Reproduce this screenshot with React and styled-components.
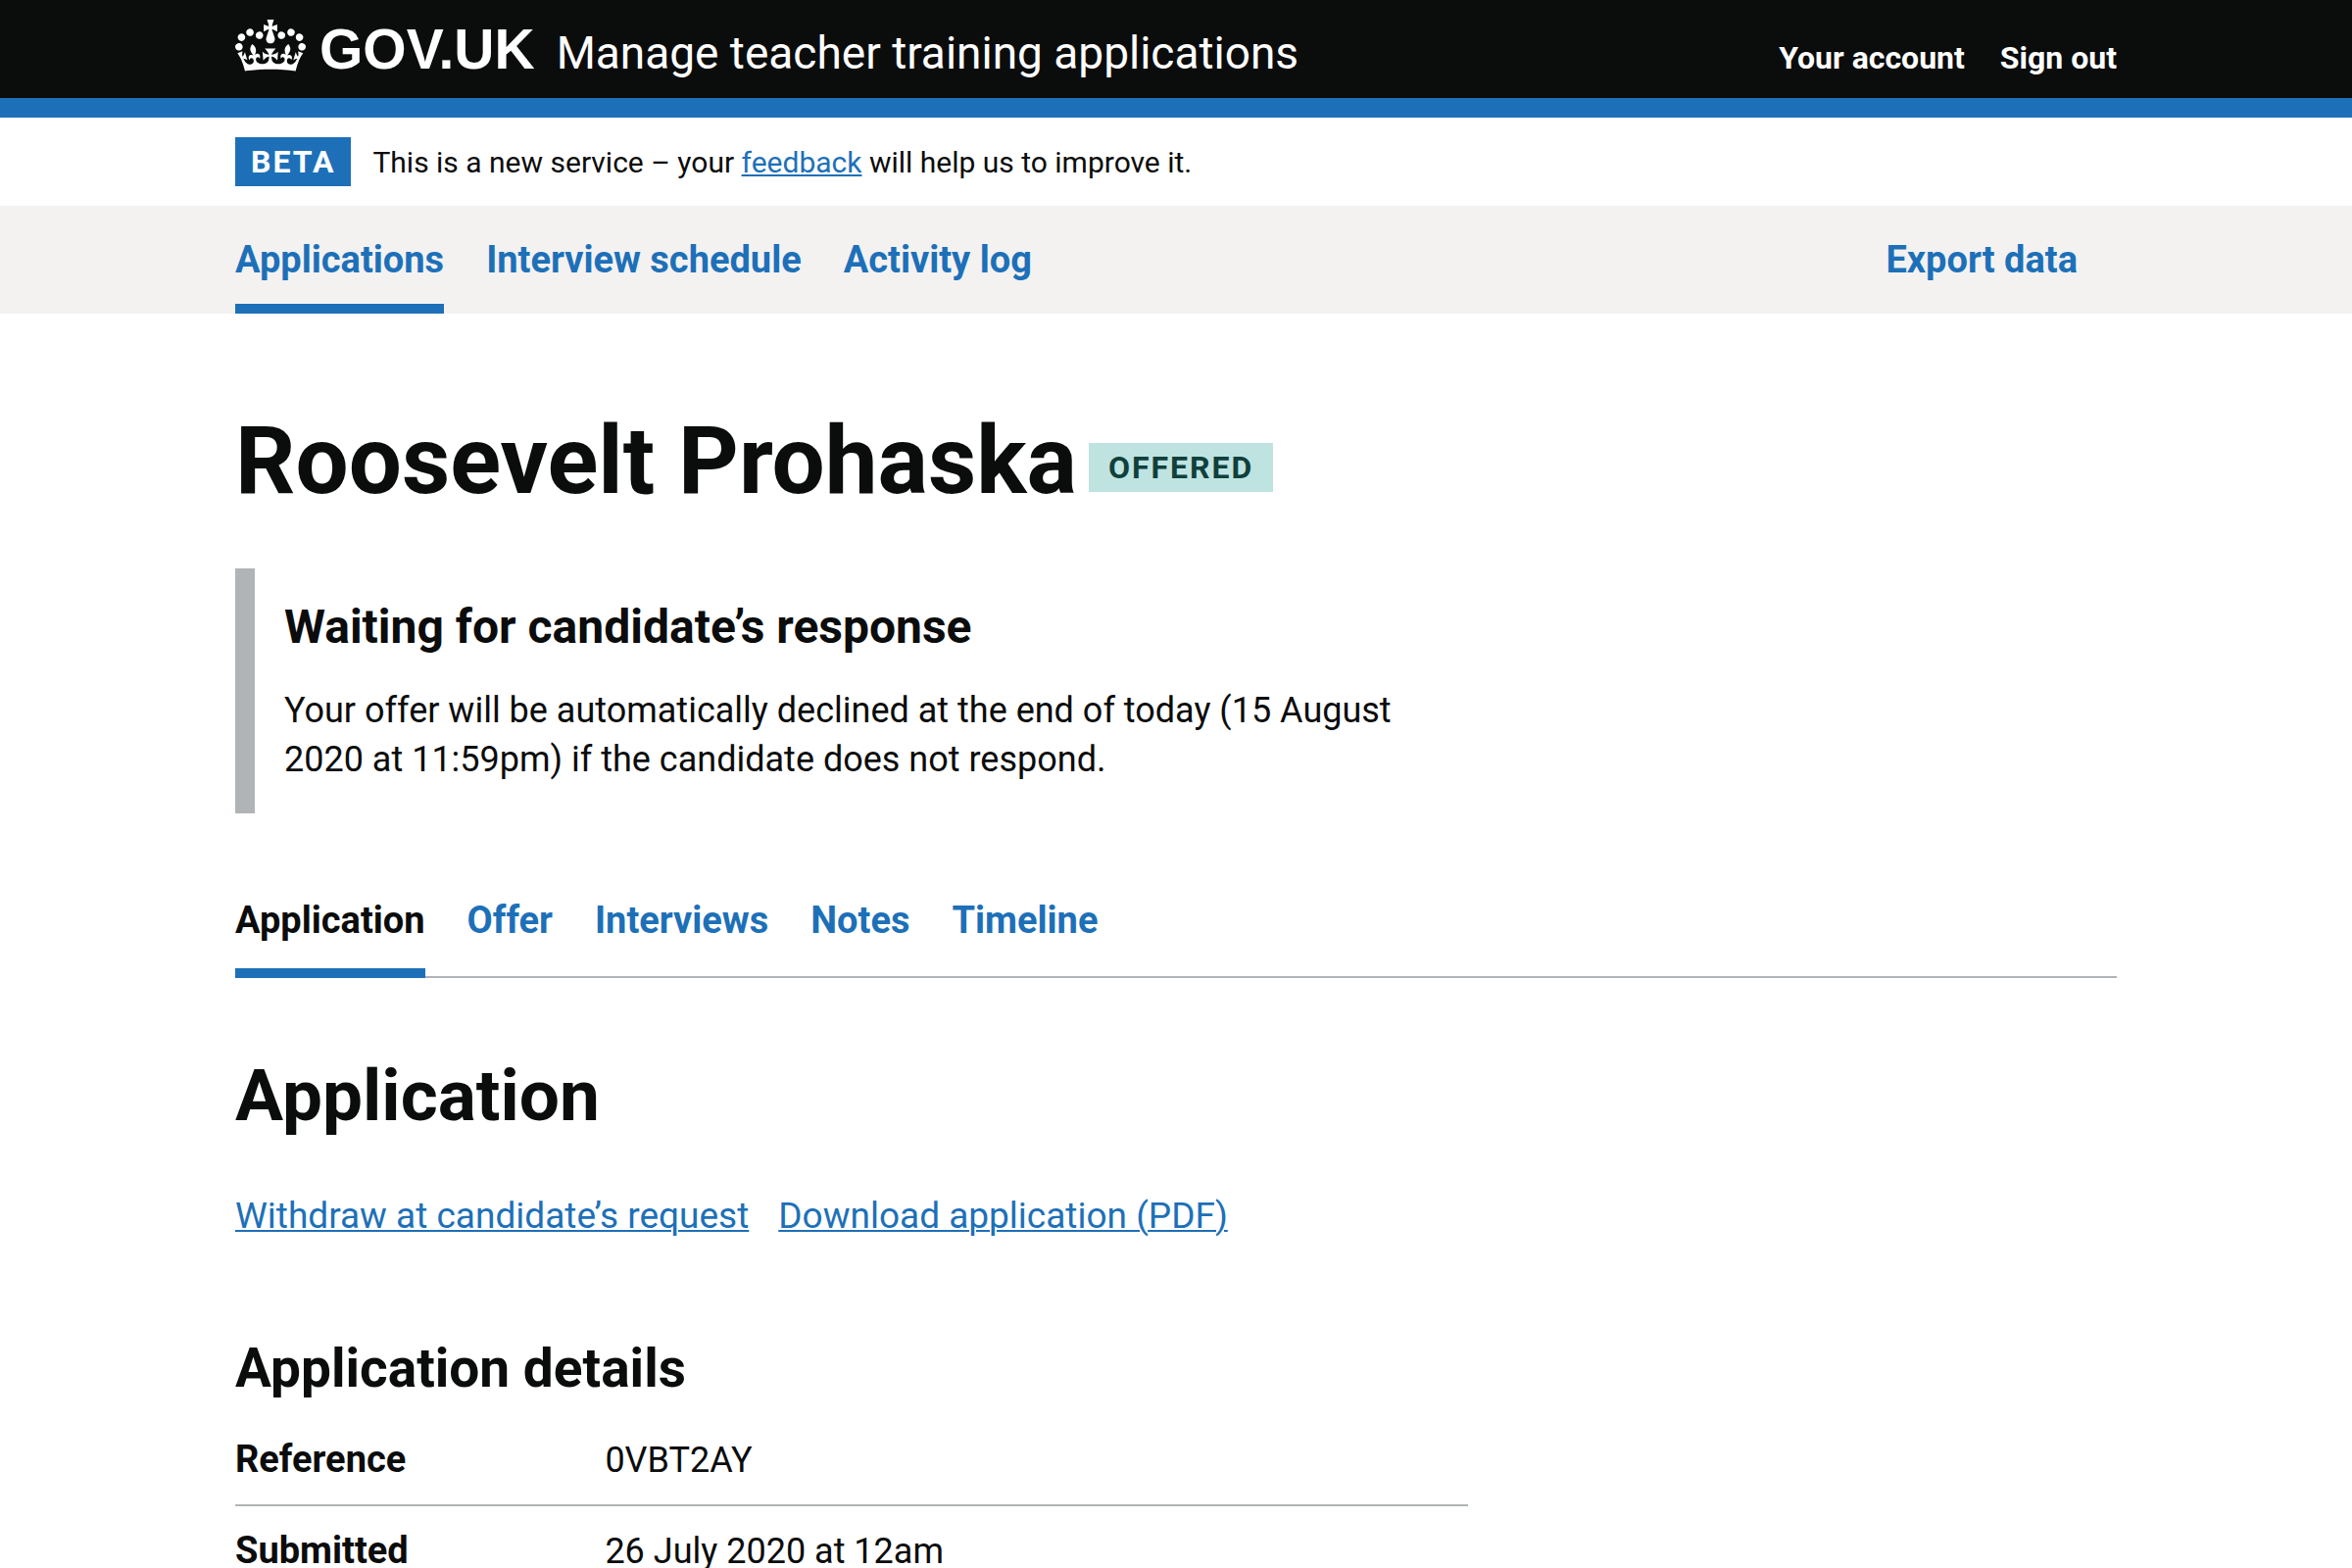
import React from "react";
import styled, { createGlobalStyle } from "styled-components";

const color = {
  text: "#0b0c0c",
  brand: "#1d70b8",
  border: "#b1b4b6",
  panel: "#f3f2f1",
  white: "#ffffff",
};

const GlobalStyle = createGlobalStyle`
  *, *::before, *::after { box-sizing: border-box; }
  body {
    margin: 0;
    background: ${color.white};
    color: ${color.text};
    font-family: Roboto, "Liberation Sans", Arial, sans-serif;
    font-size: 36px;
    line-height: 50px;
  }
  h1, h2, h3, p, ul, dl, dd { margin: 0; padding: 0; }
  ul { list-style: none; }
`;

const Container = styled.div`
  width: 80%;
  max-width: 1920px;
  margin: 0 auto;
`;

const Header = styled.header`
  background: ${color.text};
  color: ${color.white};
  border-bottom: 20px solid ${color.brand};
`;

const HeaderBar = styled(Container)`
  display: flex;
  align-items: baseline;
  gap: 22px;
  padding: 20px 0;
`;

const LogoLink = styled.a`
  display: flex;
  align-items: baseline;
  gap: 14px;
  color: inherit;
  text-decoration: none;
  font-family: "Liberation Sans", Arial, sans-serif;
  font-size: 57px;
  font-weight: 700;
  line-height: 60px;
`;

const CrownIcon = styled.svg`
  width: 72px;
  height: 53px;
  align-self: flex-start;
  fill: currentColor;
`;

const ServiceLink = styled.a`
  color: inherit;
  text-decoration: none;
  font-size: 46px;
`;

const AccountLinks = styled.ul`
  display: flex;
  gap: 36px;
  margin-left: auto;
  font-size: 32px;
  font-weight: 700;
  line-height: 40px;
`;

const AccountLink = styled.a`
  color: inherit;
  text-decoration: none;
`;

const PhaseBanner = styled(Container)`
  display: flex;
  align-items: baseline;
  gap: 22px;
  padding: 20px 0;
`;

const Tag = styled.strong`
  padding: 5px ${(p) => (p.$status ? 20 : 16)}px;
  background: ${(p) => (p.$status ? "#bfe3e0" : color.brand)};
  color: ${(p) => (p.$status ? "#10403c" : color.white)};
  font-size: 32px;
  font-weight: 700;
  line-height: 40px;
  letter-spacing: 2px;
  text-transform: uppercase;
`;

const PhaseText = styled.p`
  font-size: 30px;
  line-height: 40px;
`;

const Link = styled.a`
  color: ${color.brand};
  text-decoration: underline;
  text-decoration-thickness: 2px;
  text-underline-offset: 2px;
`;

const PrimaryNav = styled.nav`
  background: ${color.panel};
`;

const NavList = styled.ul`
  display: flex;
  gap: 43px;
`;

const NavItem = styled.li`
  ${(p) => p.$end && "margin-left: auto; padding-right: 40px;"}
`;

const NavLink = styled.a`
  display: block;
  padding: 30px 0 20px;
  border-bottom: 10px solid ${(p) => (p.$current ? color.brand : "transparent")};
  color: ${color.brand};
  font-size: 38px;
  font-weight: 700;
  text-decoration: none;
`;

const Main = styled(Container)`
  padding: 100px 0 0;
`;

const TitleRow = styled.div`
  display: flex;
  align-items: flex-end;
  gap: 12px;

  ${Tag} { margin-bottom: 18px; }
`;

const Title = styled.h1`
  font-size: 96px;
  line-height: 100px;
`;

const TwoThirds = styled.div`
  max-width: 1258px;
`;

const Inset = styled.section`
  display: flex;
  flex-direction: column;
  gap: 30px;
  margin-top: 60px;
  padding: 30px 0 30px 30px;
  border-left: 20px solid ${color.border};
`;

const InsetTitle = styled.h2`
  font-size: 48px;
  line-height: 60px;
`;

const Tabs = styled.nav`
  margin-top: 60px;
  border-bottom: 2px solid ${color.border};
`;

const TabLink = styled.a`
  display: block;
  margin-bottom: -2px;
  padding: 24px 0;
  border-bottom: 10px solid ${(p) => (p.$current ? color.brand : "transparent")};
  color: ${(p) => (p.$current ? color.text : color.brand)};
  font-size: 38px;
  font-weight: 700;
  text-decoration: none;
`;

const SectionTitle = styled.h2`
  margin: 80px 0 58px;
  font-size: 73px;
  line-height: 80px;
`;

const Actions = styled.ul`
  display: flex;
  gap: 30px;
  font-size: 37px;
`;

const DetailsTitle = styled.h3`
  margin: 100px 0 18px;
  font-size: 55px;
  line-height: 60px;
`;

const SummaryList = styled.dl`
  display: flex;
  flex-direction: column;
`;

const SummaryRow = styled.div`
  display: grid;
  grid-template-columns: 30% 1fr;
  align-items: baseline;
  padding: 20px 0;
  border-bottom: 2px solid ${color.border};
`;

const SummaryKey = styled.dt`
  font-size: 38px;
  font-weight: 700;
`;

const Crown = () => (
  <CrownIcon viewBox="0 0 132 97" aria-hidden="true" focusable="false">
    <path
      fillRule="evenodd"
      d="M25 30.2c3.5 1.5 7.7-.2 9.1-3.7 1.5-3.6-.2-7.8-3.9-9.2-3.6-1.4-7.6.3-9.1 3.9-1.4 3.5.3 7.5 3.9 9zM9 39.5c3.6 1.5 7.8-.2 9.2-3.7 1.5-3.6-.2-7.8-3.9-9.1-3.6-1.5-7.6.2-9.1 3.8-1.4 3.5.3 7.5 3.8 9zM4.4 57.2c3.5 1.5 7.7-.2 9.1-3.8 1.5-3.6-.2-7.7-3.9-9.1-3.5-1.5-7.6.3-9.1 3.8-1.4 3.5.3 7.6 3.9 9.1zm38.3-21.4c3.5 1.5 7.7-.2 9.1-3.8 1.5-3.6-.2-7.7-3.9-9.1-3.6-1.5-7.6.3-9.1 3.8-1.3 3.6.4 7.7 3.9 9.1zm64.4-5.6c-3.6 1.5-7.8-.2-9.1-3.7-1.5-3.6.2-7.8 3.8-9.2 3.6-1.4 7.7.3 9.2 3.9 1.3 3.5-.4 7.5-3.9 9zm15.9 9.3c-3.6 1.5-7.7-.2-9.1-3.7-1.5-3.6.2-7.8 3.7-9.1 3.6-1.5 7.7.2 9.2 3.8 1.5 3.5-.3 7.5-3.8 9zm4.7 17.7c-3.6 1.5-7.8-.2-9.2-3.8-1.5-3.6.2-7.7 3.9-9.1 3.6-1.5 7.7.3 9.2 3.8 1.3 3.5-.4 7.6-3.9 9.1zM89.3 35.8c-3.6 1.5-7.8-.2-9.2-3.8-1.4-3.6.2-7.7 3.9-9.1 3.6-1.5 7.7.3 9.2 3.8 1.4 3.6-.3 7.7-3.9 9.1zM69.7 17.7l8.9 4.7V9.3l-8.9 2.8c-.2-.3-.5-.6-.9-.9L72.4 0H59.6l3.5 11.2c-.3.3-.6.5-.9.9l-8.8-2.8v13.1l8.8-4.7c.3.3.6.7.9.9l-5 15.4v.1c-.2.8-.4 1.6-.4 2.4 0 4.1 3.1 7.5 7 8.1h.2c.3 0 .7.1 1 .1.4 0 .7 0 1-.1h.2c4-.6 7.1-4.1 7.1-8.1 0-.8-.1-1.7-.4-2.4V34l-5.1-15.4c.4-.2.7-.6 1-.9zM66 92.8c16.9 0 32.8 1.1 47.1 3.2 4-16.9 8.9-26.7 14-33.5l-9.6-3.4c1 4.9 1.1 7.2 0 10.2-1.5-1.4-3-4.3-4.2-8.7L108.6 76c2.8-2 5-3.2 7.5-3.3-4.4 9.4-10 11.9-13.6 11.2-4.3-.8-6.3-4.6-5.6-7.9 1-4.7 5.7-5.9 8-.5 4.3-8.7-3-11.4-7.6-8.8 7.1-7.2 7.9-13.5 2.1-21.1-8 6.1-8.1 12.3-4.5 20.8-4.7-5.4-12.1-2.5-9.5 6.2 3.4-5.2 7.9-2 7.2 3.1-.6 4.3-6.4 7.8-13.5 7.2-10.3-.9-10.9-8-11.2-13.8 2.5-.5 7.1 1.8 11 7.3L80.2 60c-4.1 4.4-8 5.3-12.3 5.4 1.4-4.4 8-11.6 8-11.6H55.5s6.4 7.2 7.9 11.6c-4.2-.1-8-1-12.3-5.4l1.4 16.4c3.9-5.5 8.5-7.7 10.9-7.3-.3 5.8-.9 12.8-11.1 13.8-7.2.6-12.9-2.9-13.5-7.2-.7-5 3.8-8.3 7.1-3.1 2.7-8.7-4.6-11.6-9.4-6.2 3.7-8.5 3.6-14.7-4.6-20.8-5.8 7.6-5 13.9 2.2 21.1-4.7-2.6-11.9.1-7.7 8.8 2.3-5.5 7.1-4.2 8.1.5.7 3.3-1.3 7.1-5.7 7.9-3.5.7-9-1.8-13.5-11.2 2.5.1 4.7 1.3 7.5 3.3l-4.7-15.4c-1.2 4.4-2.7 7.2-4.3 8.7-1.1-3-.9-5.3 0-10.2l-9.5 3.4c5 6.9 9.9 16.7 14 33.5 14.8-2.1 30.8-3.2 47.7-3.2z"
    />
  </CrownIcon>
);

const sections = [
  { label: "Applications", current: true },
  { label: "Interview schedule" },
  { label: "Activity log" },
  { label: "Export data", end: true },
];

const tabs = ["Application", "Offer", "Interviews", "Notes", "Timeline"];

const details = [
  ["Reference", "0VBT2AY"],
  ["Submitted", "26 July 2020 at 12am"],
];

export default function App() {
  return (
    <>
      <GlobalStyle />
      <Header>
        <HeaderBar>
          <LogoLink href="#">
            <Crown />
            <span>GOV.UK</span>
          </LogoLink>
          <ServiceLink href="#">Manage teacher training applications</ServiceLink>
          <AccountLinks>
            <li><AccountLink href="#">Your account</AccountLink></li>
            <li><AccountLink href="#">Sign out</AccountLink></li>
          </AccountLinks>
        </HeaderBar>
      </Header>

      <PhaseBanner>
        <Tag>Beta</Tag>
        <PhaseText>
          This is a new service – your <Link href="#">feedback</Link> will help us to improve it.
        </PhaseText>
      </PhaseBanner>

      <PrimaryNav aria-label="Primary">
        <Container>
          <NavList>
            {sections.map(({ label, current, end }) => (
              <NavItem key={label} $end={end}>
                <NavLink href="#" $current={current} aria-current={current ? "page" : undefined}>
                  {label}
                </NavLink>
              </NavItem>
            ))}
          </NavList>
        </Container>
      </PrimaryNav>

      <Main as="main">
        <TitleRow>
          <Title>Roosevelt Prohaska</Title>
          <Tag $status>Offered</Tag>
        </TitleRow>

        <TwoThirds>
          <Inset>
            <InsetTitle>Waiting for candidate’s response</InsetTitle>
            <p>
              Your offer will be automatically declined at the end of today (15 August 2020 at
              11:59pm) if the candidate does not respond.
            </p>
          </Inset>
        </TwoThirds>

        <Tabs aria-label="Application sections">
          <NavList>
            {tabs.map((label, i) => (
              <li key={label}>
                <TabLink href="#" $current={i === 0} aria-current={i === 0 ? "page" : undefined}>
                  {label}
                </TabLink>
              </li>
            ))}
          </NavList>
        </Tabs>

        <SectionTitle>Application</SectionTitle>
        <Actions>
          <li><Link href="#">Withdraw at candidate’s request</Link></li>
          <li><Link href="#">Download application (PDF)</Link></li>
        </Actions>

        <TwoThirds>
          <DetailsTitle>Application details</DetailsTitle>
          <SummaryList>
            {details.map(([key, value]) => (
              <SummaryRow key={key}>
                <SummaryKey>{key}</SummaryKey>
                <dd>{value}</dd>
              </SummaryRow>
            ))}
          </SummaryList>
        </TwoThirds>
      </Main>
    </>
  );
}
